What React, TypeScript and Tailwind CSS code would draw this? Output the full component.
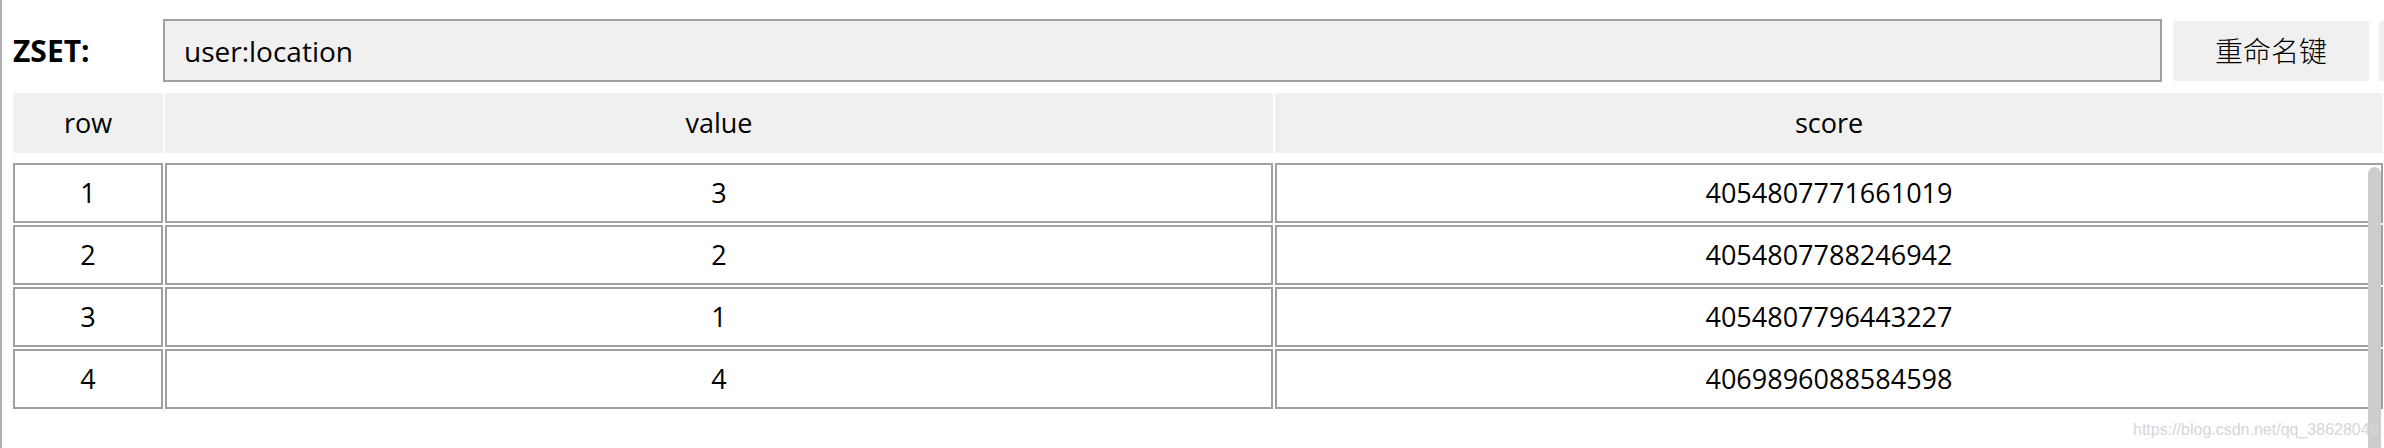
import React from "react";

const rows = [
    { row: 1, value: "3", score: "4054807771661019" },
    { row: 2, value: "2", score: "4054807788246942" },
    { row: 3, value: "1", score: "4054807796443227" },
    { row: 4, value: "4", score: "4069896088584598" },
];

const font = { fontFamily: '"Open Sans", "Noto Sans CJK SC", sans-serif' };

const App = () => {
    return (
        <div
            className="relative h-[448px] w-[2384px] overflow-hidden border-l-2 border-[#b0b0b0] bg-white pl-[11px] text-black"
            style={font}
        >
            {/* key name bar */}
            <div className="mt-[19px] flex h-[63px] items-center">
                <div className="w-[150px] text-[30px] font-bold leading-none">ZSET:</div>
                <div className="flex h-[63px] w-[1999px] items-center border-2 border-[#a0a0a0] bg-[#f0f0f0] pl-[19px] text-[28px]">
                    user:location
                </div>
                <button className="ml-[11px] flex h-[60px] w-[196px] items-center justify-center bg-[#f0f0f0] text-[28px] font-light">
                    重命名键
                </button>
                <div className="ml-[10px] h-[60px] w-[5px] bg-[#f0f0f0]" />
            </div>

            {/* header */}
            <div className="mt-[11px] grid h-[60px] grid-cols-[150px_1108px_1108px] gap-[2px] text-[27px]">
                <div className="flex items-center justify-center bg-[#f0f0f0]">row</div>
                <div className="flex items-center justify-center bg-[#f0f0f0]">value</div>
                <div className="flex items-center justify-center bg-[#f0f0f0]">score</div>
            </div>

            {/* rows */}
            <div className="mt-[10px] flex flex-col gap-[2px] text-[27px]">
                {rows.map((r) => (
                    <div key={r.row} className="grid h-[60px] grid-cols-[150px_1108px_1108px] gap-[2px]">
                        <div className="flex items-center justify-center border-2 border-[#a0a0a0]">{r.row}</div>
                        <div className="flex items-center justify-center border-2 border-[#a0a0a0]">{r.value}</div>
                        <div className="flex items-center justify-center border-2 border-[#a0a0a0]">{r.score}</div>
                    </div>
                ))}
            </div>

            {/* scrollbar thumb */}
            <div className="absolute left-[2366px] top-[167px] h-[300px] w-[13px] rounded-t-full bg-[#cdcdcd]" />

            {/* watermark */}
            <div
                className="absolute left-[2131px] top-[418px] text-[16px] text-[#d6d6d6]"
                style={{ fontFamily: '"Liberation Sans", Arial, sans-serif' }}
            >
                https://blog.csdn.net/qq_38628046
            </div>
        </div>
    );
};

export default App;
